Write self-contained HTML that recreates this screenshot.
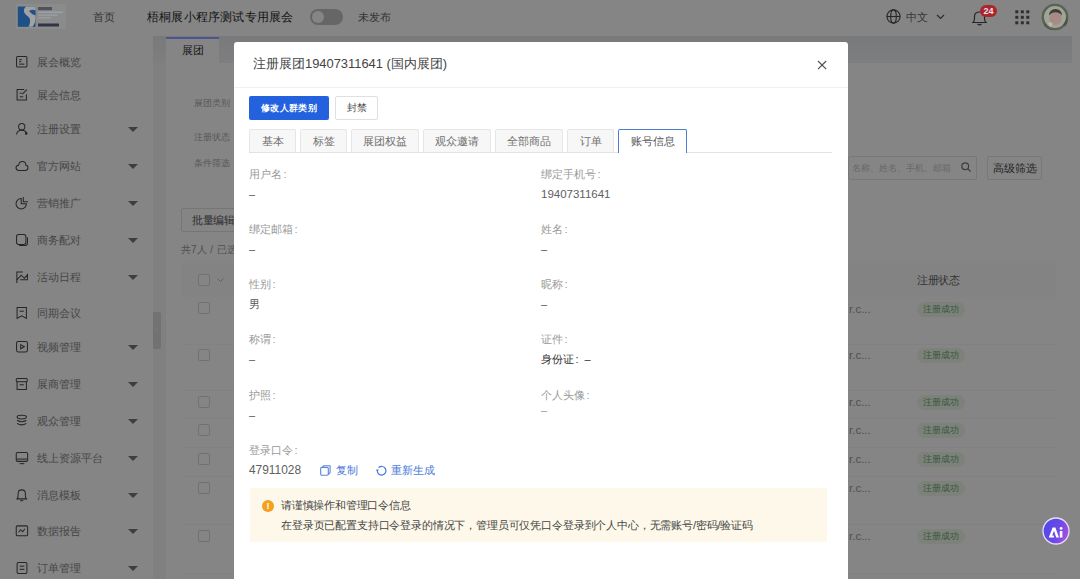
<!DOCTYPE html>
<html><head><meta charset="utf-8">
<style>
*{margin:0;padding:0;box-sizing:border-box;}
html,body{width:1080px;height:579px;overflow:hidden;background:#f5f6f8;font-family:"Liberation Sans",sans-serif;color:#333;}
.a{position:absolute;white-space:nowrap;}
#page{position:absolute;left:0;top:0;width:1080px;height:579px;}
#hdr{position:absolute;left:0;top:0;width:1080px;height:36px;background:#fff;}
#side{position:absolute;left:0;top:36px;width:153px;height:543px;background:#fff;}
.si{position:absolute;left:0;width:153px;height:20px;}
.si .t{position:absolute;left:37px;top:2px;font-size:10.7px;line-height:16px;color:#888;}
.si .ic{position:absolute;left:15px;top:3px;}
.si .car{position:absolute;left:128px;top:8px;width:0;height:0;border-left:5px solid transparent;border-right:5px solid transparent;border-top:5px solid #777;}
#mask{position:absolute;left:0;top:0;width:1080px;height:579px;background:rgba(0,0,0,0.48);}
#modal{position:absolute;left:234px;top:42px;width:614px;height:560px;background:#fff;border-radius:3px;}
.lbl{position:absolute;font-size:11px;line-height:14px;color:#999;white-space:nowrap;}
.val{position:absolute;font-size:11px;line-height:14px;color:#555;white-space:nowrap;}
.tab{position:absolute;top:87px;height:24px;background:#f7f7f7;border:1px solid #e6e6e6;border-bottom:none;border-radius:2px 2px 0 0;font-size:11px;line-height:23px;text-align:center;color:#707070;}
.bgt{position:absolute;font-size:9px;line-height:14px;color:#aaa;white-space:nowrap;}
.cb{position:absolute;left:198px;width:12px;height:12px;border:1px solid #d9d9d9;background:#fff;border-radius:2px;}
.rc{position:absolute;left:849px;font-size:11.5px;line-height:14px;color:#999;}
.tag{position:absolute;left:917px;width:48px;height:15px;background:#eef7ea;border-radius:8px;font-size:9px;line-height:15px;color:#6aa878;text-align:center;}
.rl{position:absolute;left:181px;width:875px;height:1px;background:#f8f8f8;}
</style></head><body>
<div id="page">
  <div id="hdr">
    <div class="a" style="left:93px;top:10px;font-size:11px;line-height:14px;color:#666;">首页</div>
    <div class="a" style="left:147px;top:9px;font-size:12px;letter-spacing:0.2px;line-height:16px;color:#2a2a2a;font-weight:500;">梧桐展小程序测试专用展会</div>
    <div class="a" style="left:310px;top:9px;width:33px;height:16px;border-radius:8px;background:#c4c4c4;"></div>
    <div class="a" style="left:312px;top:11px;width:12px;height:12px;border-radius:6px;background:#fff;"></div>
    <div class="a" style="left:358px;top:10px;font-size:11px;line-height:14px;color:#666;">未发布</div>
    <svg class="a" style="left:886px;top:9px;" width="15" height="15" viewBox="0 0 15 15"><g fill="none" stroke="#4a4a4a" stroke-width="1.1"><circle cx="7.5" cy="7.5" r="6.6"/><ellipse cx="7.5" cy="7.5" rx="2.8" ry="6.6"/><line x1="0.9" y1="7.5" x2="14.1" y2="7.5"/></g></svg>
    <div class="a" style="left:906px;top:10px;font-size:11px;line-height:14px;color:#666;">中文</div>
    <svg class="a" style="left:936px;top:14px;" width="9" height="6" viewBox="0 0 9 6"><polyline points="1,1 4.5,4.5 8,1" fill="none" stroke="#555" stroke-width="1.2"/></svg>
    <svg class="a" style="left:971px;top:10px;" width="17" height="16" viewBox="0 0 17 16"><g fill="none" stroke="#4a4a4a" stroke-width="1.2"><path d="M2,12.5 Q3.5,11 3.5,8.5 L3.5,6.5 Q3.5,2 8.5,2 Q13.5,2 13.5,6.5 L13.5,8.5 Q13.5,11 15,12.5 Z"/><path d="M6.5,14 Q8.5,15.8 10.5,14"/></g></svg>
    <svg class="a" style="left:1015px;top:10px;" width="15" height="15" viewBox="0 0 15 15"><g fill="#5a5a5a"><rect x="0.3" y="0.3" width="3" height="3"/><rect x="5.8" y="0.3" width="3" height="3"/><rect x="11.3" y="0.3" width="3" height="3"/><rect x="0.3" y="5.8" width="3" height="3"/><rect x="5.8" y="5.8" width="3" height="3"/><rect x="11.3" y="5.8" width="3" height="3"/><rect x="0.3" y="11.3" width="3" height="3"/><rect x="5.8" y="11.3" width="3" height="3"/><rect x="11.3" y="11.3" width="3" height="3"/></g></svg>
  </div>
  <div id="side">
<div class="si" style="top:15.5px"><svg class="ic" width="14" height="14" viewBox="0 0 13.5 13.5"><g fill="none" stroke="#4a4a4a" stroke-width="1"><rect x="1.5" y="1.5" width="10" height="10" rx="1"/><line x1="4" y1="4.5" x2="6.5" y2="4.5"/><line x1="4" y1="6.5" x2="6" y2="6.5"/><line x1="4" y1="8.8" x2="9" y2="8.8"/></g></svg><div class="t">展会概览</div></div>
<div class="si" style="top:49.0px"><svg class="ic" width="14" height="14" viewBox="0 0 13.5 13.5"><g fill="none" stroke="#4a4a4a" stroke-width="1"><path d="M9,1.5 L2,1.5 L2,11.5 L11,11.5 L11,6"/><line x1="4.5" y1="5" x2="6.5" y2="5"/><line x1="4.5" y1="8.5" x2="8" y2="8.5"/><line x1="7" y1="6" x2="11.5" y2="1.5"/></g></svg><div class="t">展会信息</div></div>
<div class="si" style="top:83.0px"><svg class="ic" width="14" height="14" viewBox="0 0 13.5 13.5"><g fill="none" stroke="#4a4a4a" stroke-width="1"><circle cx="6.5" cy="4.5" r="3"/><path d="M1.5,12 Q2,8 6.5,8 Q9.5,8 11,10"/><circle cx="10.8" cy="11" r="0.8" fill="#333"/></g></svg><div class="t">注册设置</div><div class="car"></div></div>
<div class="si" style="top:120.0px"><svg class="ic" width="14" height="14" viewBox="0 0 13.5 13.5"><g fill="none" stroke="#4a4a4a" stroke-width="1"><path d="M3.5,11 Q1,11 1,8.5 Q1,6 3.5,6 Q4,2.5 7,2.5 Q10.5,2.5 10.5,6 Q12.5,6 12.5,8.5 Q12.5,11 10,11 Z"/></g></svg><div class="t">官方网站</div><div class="car"></div></div>
<div class="si" style="top:157.0px"><svg class="ic" width="14" height="14" viewBox="0 0 13.5 13.5"><g fill="none" stroke="#4a4a4a" stroke-width="1"><path d="M6,2.5 A5,5 0 1 0 11,7.5 L6,7.5 Z"/><path d="M8,1 L8,5.5 L12.5,5.5"/></g></svg><div class="t">营销推广</div><div class="car"></div></div>
<div class="si" style="top:193.5px"><svg class="ic" width="14" height="14" viewBox="0 0 13.5 13.5"><g fill="none" stroke="#4a4a4a" stroke-width="1"><rect x="1.5" y="1.5" width="9" height="9.5" rx="2"/><path d="M4,12 L10,12 Q12,12 12,10 L12,4"/></g></svg><div class="t">商务配对</div><div class="car"></div></div>
<div class="si" style="top:230.5px"><svg class="ic" width="14" height="14" viewBox="0 0 13.5 13.5"><g fill="none" stroke="#4a4a4a" stroke-width="1"><path d="M1.8,12.5 L1.8,2 L7.5,2"/><path d="M1.8,9.5 L6,5 L9,8 L12,4.5 L12,9.5 L5,9.5"/></g></svg><div class="t">活动日程</div><div class="car"></div></div>
<div class="si" style="top:267.0px"><svg class="ic" width="14" height="14" viewBox="0 0 13.5 13.5"><g fill="none" stroke="#4a4a4a" stroke-width="1"><path d="M2,1.5 L11,1.5 L11,12 L6.5,9.5 L2,12 Z"/><line x1="4.5" y1="5" x2="8.5" y2="5"/></g></svg><div class="t">同期会议</div></div>
<div class="si" style="top:301.0px"><svg class="ic" width="14" height="14" viewBox="0 0 13.5 13.5"><g fill="none" stroke="#4a4a4a" stroke-width="1"><rect x="1.5" y="1.5" width="10.5" height="10" rx="1.5"/><path d="M5.5,4.5 L9,6.5 L5.5,8.5 Z"/></g></svg><div class="t">视频管理</div><div class="car"></div></div>
<div class="si" style="top:338.0px"><svg class="ic" width="14" height="14" viewBox="0 0 13.5 13.5"><g fill="none" stroke="#4a4a4a" stroke-width="1"><path d="M2,4.5 L2,12 L11,12 L11,4.5"/><rect x="1.2" y="1.5" width="10.6" height="3" rx="1"/><line x1="4.5" y1="7.5" x2="8.5" y2="7.5"/></g></svg><div class="t">展商管理</div><div class="car"></div></div>
<div class="si" style="top:375.0px"><svg class="ic" width="14" height="14" viewBox="0 0 13.5 13.5"><g fill="none" stroke="#4a4a4a" stroke-width="1"><ellipse cx="6.5" cy="3" rx="4.5" ry="1.8"/><path d="M2,6 Q6.5,9 11,6"/><path d="M2,9 Q6.5,12 11,9"/></g></svg><div class="t">观众管理</div><div class="car"></div></div>
<div class="si" style="top:412.0px"><svg class="ic" width="14" height="14" viewBox="0 0 13.5 13.5"><g fill="none" stroke="#4a4a4a" stroke-width="1"><rect x="1.2" y="1.5" width="11" height="8.5" rx="1.2"/><line x1="1.2" y1="7.8" x2="12.2" y2="7.8"/><line x1="4.5" y1="12.2" x2="9" y2="12.2"/></g></svg><div class="t">线上资源平台</div><div class="car"></div></div>
<div class="si" style="top:448.5px"><svg class="ic" width="14" height="14" viewBox="0 0 13.5 13.5"><g fill="none" stroke="#4a4a4a" stroke-width="1"><path d="M2,10.5 Q3,9.5 3,7 L3,5.5 Q3,1.8 6.5,1.8 Q10,1.8 10,5.5 L10,7 Q10,9.5 11,10.5 Z"/><path d="M5,12.2 L8,12.2"/></g></svg><div class="t">消息模板</div><div class="car"></div></div>
<div class="si" style="top:485.0px"><svg class="ic" width="14" height="14" viewBox="0 0 13.5 13.5"><g fill="none" stroke="#4a4a4a" stroke-width="1"><rect x="1.2" y="1.8" width="11" height="9.5" rx="1"/><path d="M3.5,8 L5.5,5.5 L7.5,7.5 L9.5,4.5"/></g></svg><div class="t">数据报告</div><div class="car"></div></div>
<div class="si" style="top:522.0px"><svg class="ic" width="14" height="14" viewBox="0 0 13.5 13.5"><g fill="none" stroke="#4a4a4a" stroke-width="1"><rect x="2" y="1.5" width="9.5" height="10.5" rx="1.2"/><line x1="4.5" y1="5" x2="9" y2="5"/><line x1="4.5" y1="8" x2="9" y2="8"/></g></svg><div class="t">订单管理</div><div class="car"></div></div>
  </div>
  <!-- collapse handle -->
  <div class="a" style="left:153px;top:312px;width:8px;height:37px;background:#dadada;border-radius:0 2px 2px 0;"></div>
  <svg class="a" style="left:154px;top:327px;" width="5" height="7" viewBox="0 0 5 7"><polyline points="3.8,0.8 1.2,3.5 3.8,6.2" fill="none" stroke="#f0f0f0" stroke-width="0.9"/></svg>
  <!-- content tab -->
  <div class="a" style="left:153px;top:36px;width:919px;height:27px;background:linear-gradient(#e8e9ec,#f1f2f4);"></div>
  <div class="a" style="left:166px;top:37px;width:53px;height:26px;background:#fff;border-top:2px solid #1f3fb0;font-size:11px;line-height:22px;text-align:center;color:#333;">展团</div>
  <!-- card -->
  <div class="a" style="left:1072px;top:36px;width:8px;height:543px;background:#fff;"></div>
  <div class="a" style="left:166px;top:63px;width:906px;height:516px;background:#fff;"></div>
  <div class="bgt" style="left:194px;top:96px;">展团类别</div>
  <div class="bgt" style="left:194px;top:130px;">注册状态</div>
  <div class="bgt" style="left:194px;top:156px;">条件筛选</div>
  <div class="a" style="left:848px;top:156px;width:129px;height:24px;border:1px solid #e6e6e6;border-radius:2px;"></div>
  <div class="bgt" style="left:852px;top:161px;color:#c8c8c8;font-size:9px;">名称、姓名、手机、邮箱</div>
  <svg class="a" style="left:961px;top:162px;" width="10" height="10" viewBox="0 0 10 10"><g fill="none" stroke="#777" stroke-width="1.2"><circle cx="4.2" cy="4.2" r="3.4"/><line x1="6.7" y1="6.7" x2="9.5" y2="9.5"/></g></svg>
  <div class="a" style="left:987px;top:156px;width:55px;height:24px;border:1px solid #e6e6e6;border-radius:2px;font-size:11px;line-height:23px;text-align:center;color:#444;">高级筛选</div>
  <div class="a" style="left:181px;top:208px;width:60px;height:24px;border:1px solid #e3e3e3;border-radius:2px;font-size:11px;line-height:23px;padding-left:10px;color:#555;letter-spacing:-0.5px;">批量编辑</div>
  <div class="bgt" style="left:181px;top:243px;color:#999;font-size:10px;">共7人 <span style="margin:0 1px">/</span> 已选</div>
  <!-- table -->
  <div class="a" style="left:181px;top:263px;width:875px;height:34px;background:#fbfbfb;"></div>
  <div class="cb" style="top:274px;"></div>
  <svg class="a" style="left:216.5px;top:278px;" width="7" height="5" viewBox="0 0 7 5"><polyline points="0.5,0.5 3.5,3.5 6.5,0.5" fill="none" stroke="#bbb" stroke-width="1"/></svg>
  <div class="a" style="left:917px;top:273px;font-size:11px;letter-spacing:-0.4px;line-height:14px;color:#666;">注册状态</div>
  <div class="rl" style="top:344px;"></div>
  <div class="rl" style="top:390px;"></div>
  <div class="rl" style="top:418px;"></div>
  <div class="rl" style="top:447px;"></div>
  <div class="rl" style="top:476px;"></div>
  <div class="rl" style="top:524px;"></div>
  <div class="rl" style="top:573px;"></div>
  <div class="cb" style="top:302px;"></div>
  <div class="cb" style="top:349px;"></div>
  <div class="cb" style="top:396px;"></div>
  <div class="cb" style="top:424px;"></div>
  <div class="cb" style="top:453px;"></div>
  <div class="cb" style="top:482px;"></div>
  <div class="cb" style="top:530px;"></div>
  <div class="rc" style="top:302px;">r.c...</div>
  <div class="rc" style="top:348px;">r.c...</div>
  <div class="rc" style="top:395px;">r.c...</div>
  <div class="rc" style="top:423px;">r.c...</div>
  <div class="rc" style="top:452px;">r.c...</div>
  <div class="rc" style="top:481px;">r.c...</div>
  <div class="rc" style="top:529px;">r.c...</div>
  <div class="tag" style="top:302px;">注册成功</div>
  <div class="tag" style="top:348px;">注册成功</div>
  <div class="tag" style="top:395px;">注册成功</div>
  <div class="tag" style="top:423px;">注册成功</div>
  <div class="tag" style="top:452px;">注册成功</div>
  <div class="tag" style="top:481px;">注册成功</div>
  <div class="tag" style="top:529px;">注册成功</div>
</div>
<div id="mask"></div>
<!-- saturated items above mask -->
<div class="a" style="left:166px;top:37px;width:53px;height:2px;background:#4a5490;"></div>
<div class="a" style="left:980px;top:5px;width:17px;height:12px;border-radius:6px;background:#ac2430;color:#f0e0e0;font-size:9px;line-height:12px;text-align:center;font-weight:bold;">24</div>
<svg class="a" style="left:1041px;top:3px;" width="28" height="28" viewBox="0 0 28 28"><defs><clipPath id="avc"><circle cx="14" cy="14" r="13.6"/></clipPath></defs><g clip-path="url(#avc)"><rect width="28" height="28" fill="#9ea596"/><circle cx="14" cy="14" r="12.5" fill="none" stroke="#5a6252" stroke-width="3"/><path d="M3,20 Q6,26 12,27 L4,27 Z" fill="#3e4636"/><path d="M22,22 Q25,18 26,14 L27,24 Z" fill="#4a5242"/><ellipse cx="14.5" cy="15" rx="6.2" ry="7" fill="#a88a86"/><path d="M8,12.5 Q8.5,6 14.5,6 Q20.5,6 21,12.5 Q19,9.5 14.5,9.2 Q10,9.5 8,12.5 Z" fill="#3c4034"/><path d="M7,20 Q10,18 12,21 L9,24 Z" fill="#b8bcb0"/></g></svg>
<!-- logo -->
<svg class="a" style="left:16px;top:4px;" width="50" height="25" viewBox="0 0 50 25"><rect x="0" y="0" width="50" height="25" fill="#8b8b8b"/><path d="M1.8,2.5 L19.5,2.5 L19.5,22.8 L1.8,22.8 Z" fill="#1e5186"/><path d="M10,2.5 C6.5,5.5 7.5,9.5 12,12.5 C14.5,14.5 15,18 12.5,22.8 L16.5,22.8 C19.5,19 19.5,15.5 19.5,14 L19.5,2.5 Z" fill="#a2a2a2"/><path d="M13,7 Q16.5,4.8 19.5,6.5 L19.5,11.5 Q15.5,10.5 13,7 Z" fill="#1e5186"/><rect x="22" y="3" width="14" height="3.2" fill="#4e525a"/><rect x="22" y="7.5" width="25" height="1.6" fill="#9ba0a6"/><rect x="22" y="10.5" width="20" height="1.3" fill="#9ba0a6"/><rect x="22" y="13.2" width="13" height="1.3" fill="#9ba0a6"/><rect x="22" y="19.5" width="21" height="3" fill="#2f3448"/></svg>
<!-- AI button -->
<svg class="a" style="left:1042px;top:517px;" width="28" height="28" viewBox="0 0 28 28"><defs><linearGradient id="ag" x1="0" y1="0.3" x2="1" y2="0.7"><stop offset="0" stop-color="#5048ea"/><stop offset="0.55" stop-color="#6a4ae6"/><stop offset="1" stop-color="#b04ee2"/></linearGradient></defs><circle cx="14" cy="14" r="13" fill="url(#ag)" stroke="#e6dcff" stroke-width="1.3"/><path d="M6.8,20.5 L10.6,10.6 L13.4,10.6 L17,20.5 L14.2,20.5 L12,13.8 L10.2,18.6 L11.6,18.6 L12.2,20.5 Z" fill="#fff"/><rect x="17.8" y="14" width="2.6" height="6.5" fill="#fff"/><circle cx="19.1" cy="11.4" r="1.4" fill="#fff"/></svg>
<div id="modal">
  <div class="a" style="left:19px;top:14px;font-size:12.9px;line-height:16px;color:#444;">注册展团19407311641 (国内展团)</div>
  <svg class="a" style="left:583px;top:18px;" width="10" height="10" viewBox="0 0 10 10"><g stroke="#505050" stroke-width="1.15"><line x1="1" y1="1" x2="9.2" y2="9.2"/><line x1="9.2" y1="1" x2="1" y2="9.2"/></g></svg>
  <div class="a" style="left:0;top:45px;width:614px;height:1px;background:#f0f0f0;"></div>
  <div class="a" style="left:15px;top:54px;width:80px;height:24px;background:#2361de;border-radius:2px;color:#fff;font-size:9px;letter-spacing:0.4px;line-height:24px;text-align:center;font-weight:bold;">修改人群类别</div>
  <div class="a" style="left:101px;top:54px;width:43px;height:24px;background:#fff;border:1px solid #e0e0e0;border-radius:2px;color:#444;font-size:10px;line-height:22px;text-align:center;">封禁</div>
  <div class="tab" style="left:15px;width:47px;">基本</div>
  <div class="tab" style="left:66px;width:47px;">标签</div>
  <div class="tab" style="left:117px;width:68px;">展团权益</div>
  <div class="tab" style="left:189px;width:68px;">观众邀请</div>
  <div class="tab" style="left:261px;width:68px;">全部商品</div>
  <div class="tab" style="left:333px;width:47px;">订单</div>
  <div class="a" style="left:15px;top:110px;width:583px;height:1px;background:#e2e2e2;"></div>
  <div class="tab" style="left:384px;width:69px;background:#fff;border:1.5px solid #4a7fd4;border-bottom:none;height:24px;color:#555;">账号信息</div>

  <div class="lbl" style="left:15px;top:125px;">用户名<span style="margin-left:1.5px">:</span></div>
  <div class="val" style="left:15px;top:145px;">–</div>
  <div class="lbl" style="left:15px;top:180px;">绑定邮箱<span style="margin-left:1.5px">:</span></div>
  <div class="val" style="left:15px;top:200px;">–</div>
  <div class="lbl" style="left:15px;top:235px;">性别<span style="margin-left:1.5px">:</span></div>
  <div class="val" style="left:15px;top:255px;">男</div>
  <div class="lbl" style="left:15px;top:290px;">称谓<span style="margin-left:1.5px">:</span></div>
  <div class="val" style="left:15px;top:310px;">–</div>
  <div class="lbl" style="left:15px;top:346px;">护照<span style="margin-left:1.5px">:</span></div>
  <div class="val" style="left:15px;top:366px;">–</div>
  <div class="lbl" style="left:15px;top:401px;">登录口令<span style="margin-left:1.5px">:</span></div>
  <div class="val" style="left:15px;top:421px;font-size:11.9px;color:#606060;">47911028</div>

  <div class="lbl" style="left:307px;top:125px;">绑定手机号<span style="margin-left:1.5px">:</span></div>
  <div class="val" style="left:307px;top:145px;font-size:11.5px;color:#606060;">19407311641</div>
  <div class="lbl" style="left:307px;top:180px;">姓名<span style="margin-left:1.5px">:</span></div>
  <div class="val" style="left:307px;top:200px;">–</div>
  <div class="lbl" style="left:307px;top:235px;">昵称<span style="margin-left:1.5px">:</span></div>
  <div class="val" style="left:307px;top:255px;">–</div>
  <div class="lbl" style="left:307px;top:290px;">证件<span style="margin-left:1.5px">:</span></div>
  <div class="val" style="left:307px;top:310px;color:#333;">身份证<span style="margin-left:1.5px">:</span><span style="margin-left:6px">–</span></div>
  <div class="lbl" style="left:307px;top:346px;">个人头像<span style="margin-left:1.5px">:</span></div>
  <div class="val" style="left:307px;top:361px;color:#999;">–</div>

  <svg class="a" style="left:86px;top:423px;" width="11" height="11" viewBox="0 0 11 11"><g fill="none" stroke="#5a84dc" stroke-width="1.1" stroke-linejoin="round"><rect x="0.7" y="2.4" width="7.6" height="7.8" rx="1.2"/><path d="M2.2,2.4 L3.6,0.8 L10.1,0.8 L10.1,7.6 L8.3,9.6"/></g></svg>
  <div class="a" style="left:101.5px;top:421px;font-size:11px;line-height:14px;color:#4a78da;">复制</div>
  <svg class="a" style="left:141.5px;top:423px;" width="11" height="11" viewBox="0 0 11 11"><g fill="none" stroke="#4a78da" stroke-width="1.2"><path d="M1.3,5.8 A4.3,4.3 0 1 0 2.6,2.7"/></g><path d="M0,4.6 L2.8,4.6 L1.4,7.2 Z" fill="#4a78da"/></svg>
  <div class="a" style="left:156.5px;top:421px;font-size:11px;line-height:14px;color:#4a78da;">重新生成</div>

  <div class="a" style="left:16px;top:446px;width:577px;height:54px;background:#fdf8e9;"></div>
  <div class="a" style="left:28px;top:458px;width:12px;height:12px;border-radius:6px;background:#f4a020;color:#fff;font-size:9px;line-height:12px;text-align:center;font-weight:bold;">!</div>
  <div class="a" style="left:47px;top:456px;font-size:11px;letter-spacing:-0.2px;line-height:14px;color:#444;">请谨慎操作和管理口令信息</div>
  <div class="a" style="left:47px;top:476px;font-size:11px;letter-spacing:-0.16px;line-height:14px;color:#444;">在登录页已配置支持口令登录的情况下，管理员可仅凭口令登录到个人中心，无需账号/密码/验证码</div>
</div>
</body></html>
